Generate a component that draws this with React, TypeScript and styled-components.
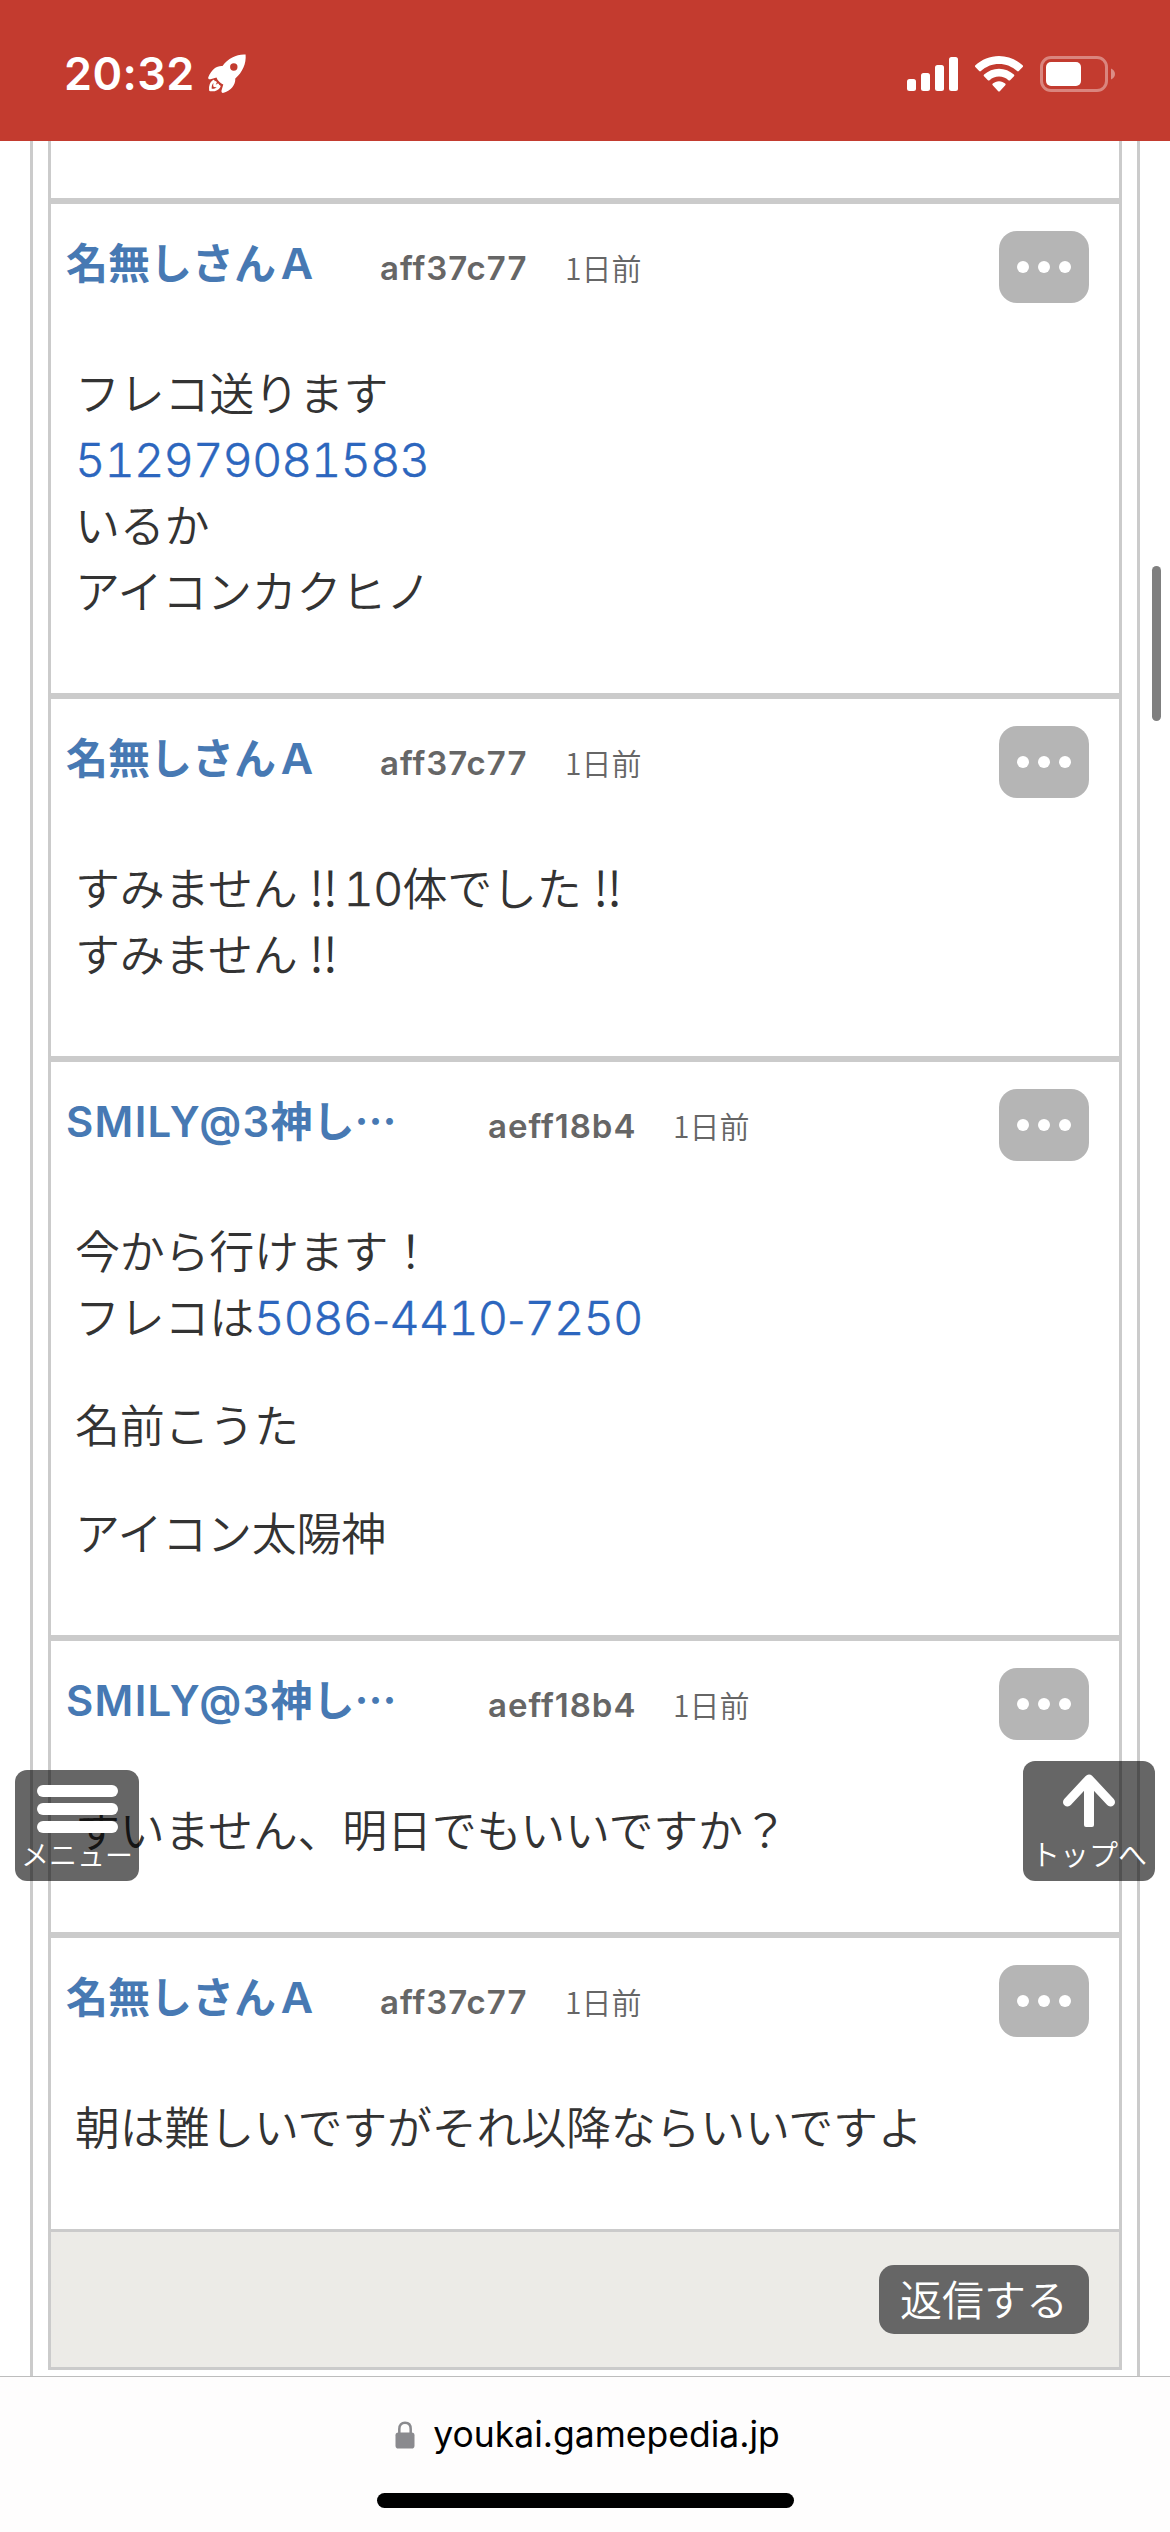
import React from "react";
import styled, { createGlobalStyle } from "styled-components";

const jp = `"Noto Sans CJK JP", "Noto Sans", sans-serif`;
const latin = `Inter, "Noto Sans CJK JP", sans-serif`;
const line = "#cbcbcb";

const GlobalStyle = createGlobalStyle`
  * { box-sizing: border-box; }
  html, body { margin: 0; padding: 0; background: #fff; overflow: hidden; }
  body { font-family: ${jp}; color: #333; }
  a { text-decoration: none; color: inherit; }
  button { border: 0; margin: 0; padding: 0; font: inherit; color: inherit; }
`;

const Screen = styled.div`
  position: relative;
  display: flex;
  flex-direction: column;
  width: 1170px;
  height: 2532px;
  overflow: hidden;
  background: #fff;
`;

const StatusBar = styled.header`
  display: flex;
  justify-content: space-between;
  align-items: flex-start;
  flex: none;
  height: 141px;
  padding: 46px 54px 0 64px;
  background: #c33b2f;
  color: #fff;
`;

const StatusGroup = styled.div<{ $gap: number }>`
  display: flex;
  align-items: center;
  height: 56px;
  gap: ${(p) => p.$gap}px;
`;

const Clock = styled.span`
  width: 131px;
  font: 600 45px/56px ${latin};
  letter-spacing: 0.4px;
  white-space: nowrap;
`;

const Page = styled.main`
  flex: 1;
  min-height: 0;
  padding: 0 30px;
  overflow: hidden;
`;

const Outer = styled.div`
  height: 100%;
  padding: 0 15px;
  border: solid ${line};
  border-width: 0 3px;
`;

const Thread = styled.section`
  border: solid ${line};
  border-width: 0 3px 3px;
`;

const PreviousPost = styled.div`
  height: 57px;
`;

const Post = styled.article`
  border-top: 6px solid ${line};
  padding: 27px 30px 70px 15px;
`;

const PostHeader = styled.div`
  display: flex;
  align-items: flex-start;
  height: 128px;
`;

const Name = styled.a<{ $long?: boolean }>`
  width: ${(p) => (p.$long ? 422 : 314)}px;
  font: 600 42px/60px ${jp};
  color: #4779b3;
  white-space: nowrap;
`;

const NameLatin = styled.span`
  font-family: ${latin};
  font-weight: 600;
  letter-spacing: 1.3px;
`;

const UserId = styled.span`
  width: 185px;
  padding-top: 5px;
  font: 600 33px/64px ${latin};
  letter-spacing: 1px;
  color: #666;
  white-space: nowrap;
`;

const Time = styled.time`
  flex: 1;
  padding-top: 4px;
  font: 350 30px/64px ${jp};
  color: #666;
`;

const MoreButton = styled.button`
  display: flex;
  align-items: center;
  justify-content: center;
  gap: 9px;
  width: 90px;
  height: 72px;
  border-radius: 18px;
  background: #b5b5b5;
`;

const Dot = styled.i`
  width: 12px;
  height: 12px;
  border-radius: 50%;
  background: #fff;
`;

const Body = styled.div`
  display: flex;
  flex-direction: column;
  gap: 42px;
  padding-left: 9px;
  font: 350 45px/66px ${jp};
  letter-spacing: -0.25px;
`;

const Paragraph = styled.p`
  margin: 0;
`;

const Row = styled.span`
  display: block;
  height: 66px;
  white-space: nowrap;
`;

const Digits = styled.span`
  font: 300 47px/66px ${latin};
  font-variant-numeric: tabular-nums;
  letter-spacing: -0.9px;
  -webkit-text-stroke: 0.4px currentColor;
`;

const Phone = styled(Digits).attrs({ as: "a" })`
  color: #2c66be;
`;

const Dash = styled.span`
  font-size: 40px;
  font-variant-numeric: normal;
`;

const Bangs = styled.span`
  display: inline-block;
  width: 46px;
  padding-left: 6px;
  font-size: 48px;
  line-height: 60px;
  text-align: center;
`;

const ReplyBar = styled.div`
  display: flex;
  justify-content: flex-end;
  height: 138px;
  padding: 33px 30px 0;
  border-top: 3px solid ${line};
  background: #ecebe7;
`;

const ReplyButton = styled.button`
  width: 210px;
  height: 69px;
  padding-bottom: 4px;
  border-radius: 15px;
  background: #666;
  color: #fff;
  font: 350 42px/65px ${jp};
`;

const BrowserBar = styled.footer`
  display: flex;
  flex-direction: column;
  align-items: center;
  flex: none;
  height: 156px;
  border-top: 1px solid #bdbdbd;
  background: #fefdfd;
`;

const Address = styled.div`
  display: flex;
  align-items: center;
  gap: 18px;
  height: 58px;
  margin: 29px 0 29px;
  padding-left: 5px;
  font: 400 35.5px/56px ${latin};
  color: #000;
`;

const HomeIndicator = styled.div`
  width: 417px;
  height: 15px;
  border-radius: 8px;
  background: #000;
`;

const ScrollThumb = styled.div`
  position: absolute;
  top: 566px;
  right: 9px;
  width: 9px;
  height: 155px;
  border-radius: 5px;
  background: #7f7f7f;
`;

const FloatingButton = styled.button<{ $side: "left" | "right"; $w: number; $h: number }>`
  position: absolute;
  bottom: 651px;
  ${(p) => p.$side}: 15px;
  display: flex;
  flex-direction: column;
  align-items: center;
  width: ${(p) => p.$w}px;
  height: ${(p) => p.$h}px;
  border-radius: 12px;
  background: rgba(0, 0, 0, 0.6);
  color: #fff;
`;

const MenuBars = styled.span`
  display: flex;
  flex-direction: column;
  gap: 6px;
  margin: 15px 0 0;
`;

const MenuLine = styled.i`
  width: 81px;
  height: 12px;
  border-radius: 6px;
  background: #fff;
`;

const FloatLabel = styled.span<{ $size: number; $top: number }>`
  margin-top: ${(p) => p.$top}px;
  font: 350 ${(p) => p.$size}px/36px ${jp};
  white-space: nowrap;
`;

const UpArrow = styled.svg`
  margin-top: 13px;
`;

const Rocket = () => (
  <svg width="40" height="40" viewBox="0 0 40 40">
    <path
      fill="#fff"
      fillRule="evenodd"
      d="M38.6 0.6C30 0 21.5 4 15.500 12C10 11.500 4.500 15 1.200 23.500C1 25 2 25.600 3.500 25.200L9.500 23.500C10.500 26.500 13 29 16.300 30.500L14.500 36.500C14.200 38.500 15.200 39.300 16.800 38.800C24 36.500 28.500 31 28.300 24.500C35.500 18.500 39.400 9.500 38.600 0.6ZM26.800 9.300A3.700 3.700 0 1 1 26.800 16.700A3.700 3.700 0 1 1 26.800 9.300Z"
    />
    <path
      fill="none"
      stroke="#fff"
      strokeWidth="2.600"
      strokeLinecap="round"
      strokeLinejoin="round"
      d="M6.500 27.200C3.300 29.500 3 32.500 3.400 36C7 36.300 10.500 35.500 12.300 32.300M8.500 28.500C7.300 29.500 7.300 30.700 7.500 31.800C8.800 32 10 31.700 10.800 30.800"
    />
  </svg>
);

const Signal = () => (
  <svg width="51" height="34" viewBox="0 0 51 34" fill="#fff">
    <rect x="0" y="22" width="9" height="12" rx="2.500" />
    <rect x="14" y="16" width="9" height="18" rx="2.500" />
    <rect x="28" y="8" width="9" height="26" rx="2.500" />
    <rect x="42" y="0" width="9" height="34" rx="2.500" />
  </svg>
);

const Wifi = () => (
  <svg width="48" height="36" viewBox="0 0 48 36" fill="#fff">
    <path d="M24 0C33 0 41.300 3.500 47.600 9.300C48.200 9.900 48.200 10.500 47.700 11L43.800 15C43.300 15.500 42.700 15.500 42.100 15C37.200 10.500 31 7.900 24 7.900S10.800 10.500 5.900 15C5.300 15.500 4.700 15.500 4.200 15L0.300 11C-0.200 10.500-0.200 9.900 0.400 9.300C6.700 3.500 15 0 24 0Z" />
    <path d="M24 12.700C29.700 12.700 34.900 14.900 38.900 18.500C39.500 19.100 39.500 19.700 39 20.200L35.100 24.200C34.600 24.700 34 24.700 33.400 24.200C30.800 22 27.600 20.600 24 20.600S17.200 22 14.600 24.200C14 24.700 13.400 24.700 12.900 24.200L9 20.200C8.500 19.700 8.500 19.100 9.100 18.500C13.100 14.900 18.300 12.700 24 12.700Z" />
    <path d="M24 25.200C26.400 25.200 28.600 26.100 30.200 27.600C30.800 28.200 30.800 28.700 30.300 29.200L24.800 35.200C24.300 35.700 23.700 35.700 23.200 35.200L17.700 29.200C17.200 28.700 17.200 28.200 17.800 27.600C19.400 26.100 21.600 25.200 24 25.200Z" />
  </svg>
);

const Battery = () => (
  <svg width="76" height="36" viewBox="0 0 76 36">
    <rect x="1.500" y="1.500" width="65" height="33" rx="9.500" fill="none" stroke="#fff" strokeOpacity="0.38" strokeWidth="3" />
    <rect x="6" y="6" width="35" height="24" rx="5" fill="#fff" />
    <path d="M71 12.500C73.500 13.500 75 15.500 75 18S73.500 22.500 71 23.500Z" fill="#fff" fillOpacity="0.42" />
  </svg>
);

const Lock = () => (
  <svg width="20" height="28" viewBox="0 0 20 28">
    <rect x="0.500" y="11.500" width="19" height="16" rx="2.800" fill="#8a8a8e" />
    <path d="M4.300 13V8C4.300 4 6.500 1.800 10 1.800S15.700 4 15.700 8V13" fill="none" stroke="#8a8a8e" strokeWidth="2.500" />
  </svg>
);

type PostData = { long?: boolean; name: React.ReactNode; id: string; text: React.ReactNode[][] };

const anon = <>名無しさんＡ</>;
const smily = (
  <>
    <NameLatin>SMILY@3</NameLatin>神し…
  </>
);

const friendCode = (
  <Phone>
    5086<Dash>-</Dash>4410<Dash>-</Dash>7250
  </Phone>
);

const posts: PostData[] = [
  {
    name: anon,
    id: "aff37c77",
    text: [["フレコ送ります", <Phone>512979081583</Phone>, "いるか", "アイコンカクヒノ"]],
  },
  {
    name: anon,
    id: "aff37c77",
    text: [
      [
        <>
          すみません<Bangs>‼</Bangs>
          <Digits>10</Digits>体でした<Bangs>‼</Bangs>
        </>,
        <>
          すみません<Bangs>‼</Bangs>
        </>,
      ],
    ],
  },
  {
    long: true,
    name: smily,
    id: "aeff18b4",
    text: [["今から行けます！", <>フレコは{friendCode}</>], ["名前こうた"], ["アイコン太陽神"]],
  },
  { long: true, name: smily, id: "aeff18b4", text: [["すいません、明日でもいいですか？"]] },
  { name: anon, id: "aff37c77", text: [["朝は難しいですがそれ以降ならいいですよ"]] },
];

export default function App() {
  return (
    <Screen lang="ja">
      <GlobalStyle />
      <StatusBar>
        <StatusGroup $gap={12}>
          <Clock>20:32</Clock>
          <Rocket />
        </StatusGroup>
        <StatusGroup $gap={17}>
          <Signal />
          <Wifi />
          <Battery />
        </StatusGroup>
      </StatusBar>
      <Page>
        <Outer>
          <Thread>
            <PreviousPost />
            {posts.map((post, i) => (
              <Post key={i}>
                <PostHeader>
                  <Name $long={post.long}>{post.name}</Name>
                  <UserId>{post.id}</UserId>
                  <Time>
                    1日前
                  </Time>
                  <MoreButton aria-label="メニュー">
                    <Dot />
                    <Dot />
                    <Dot />
                  </MoreButton>
                </PostHeader>
                <Body>
                  {post.text.map((rows, p) => (
                    <Paragraph key={p}>
                      {rows.map((row, r) => (
                        <Row key={r}>{row}</Row>
                      ))}
                    </Paragraph>
                  ))}
                </Body>
              </Post>
            ))}
            <ReplyBar>
              <ReplyButton>返信する</ReplyButton>
            </ReplyBar>
          </Thread>
        </Outer>
      </Page>
      <BrowserBar>
        <Address>
          <Lock />
          <span>youkai.gamepedia.jp</span>
        </Address>
        <HomeIndicator />
      </BrowserBar>
      <ScrollThumb />
      <FloatingButton $side="left" $w={124} $h={111}>
        <MenuBars>
          <MenuLine />
          <MenuLine />
          <MenuLine />
        </MenuBars>
        <FloatLabel $size={28} $top={3}>メニュー</FloatLabel>
      </FloatingButton>
      <FloatingButton $side="right" $w={132} $h={120}>
        <UpArrow width="52" height="54" viewBox="0 0 52 54" fill="none">
          <path d="M26 5V49" stroke="#fff" strokeWidth="10" strokeLinecap="butt" />
          <path d="M4.500 28L26 5L47.500 28" stroke="#fff" strokeWidth="9" strokeLinecap="round" strokeLinejoin="round" />
          <rect x="21" y="40" width="10" height="13" rx="2" fill="#fff" />
        </UpArrow>
        <FloatLabel $size={29} $top={7}>トップへ</FloatLabel>
      </FloatingButton>
    </Screen>
  );
}
